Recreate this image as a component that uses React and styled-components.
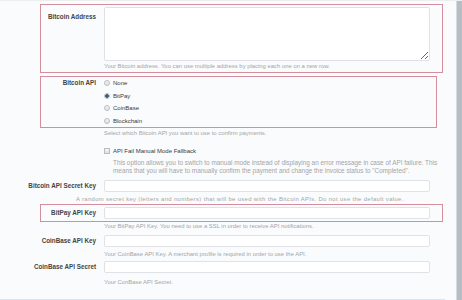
import React from "react";
import styled, { createGlobalStyle } from "styled-components";

const Global = createGlobalStyle`
  html, body { margin: 0; padding: 0; background: #fafbfd; }
  body { font-family: "Liberation Sans", Arial, sans-serif; color: #333; }
  * { box-sizing: border-box; }
`;

const Page = styled.div`
  display: flex;
  width: 462px;
  height: 300px;
  overflow: hidden;
  border-top: 1px solid #eceef0;
`;

const Main = styled.div`
  flex: 1;
  padding-top: 3px;
  display: flex;
  flex-direction: column;
`;

const Scrollbar = styled.div`
  width: 6px;
  background: #b6bdc4;
  border-left: 1px solid #d5dade;
`;

const Frame = styled.div`
  margin-left: 40px;
  margin-top: ${(p) => p.$mt || 0}px;
  width: ${(p) => p.$w || 403}px;
  border: 1px solid ${(p) => (p.$hl ? "#d48e9c" : "transparent")};
  padding: ${(p) => p.$pad || 0}px 0;
`;

const Grid = styled.div`
  display: grid;
  grid-template-columns: 55px 326px;
  column-gap: 8px;
  align-items: ${(p) => p.$align || "center"};
`;

const Label = styled.div`
  display: flex;
  justify-content: flex-end;
  white-space: nowrap;
  font-size: 6.3px;
  font-weight: bold;
  color: #444;
  line-height: 8px;
  padding-top: ${(p) => p.$pt || 0}px;
`;

const TextArea = styled.textarea`
  display: block;
  width: 326px;
  height: 54px;
  margin: 0;
  border: 1px solid #e0e1e4;
  border-radius: 2px;
  background: #fff;
  resize: vertical;
  font: inherit;
  outline: none;
`;

const Input = styled.input`
  display: block;
  width: 326px;
  height: 12px;
  margin: 0;
  padding: 0 3px;
  border: 1px solid #e1e2e5;
  border-radius: 2px;
  background: #fff;
  outline: none;
`;

const Help = styled.div`
  margin-left: ${(p) => p.$left ?? 104}px;
  margin-top: ${(p) => p.$mt || 0}px;
  font-size: 5.9px;
  letter-spacing: ${(p) => p.$track || 0}px;
  line-height: 8px;
  color: #a5a5a5;
  white-space: nowrap;
  grid-column: ${(p) => (p.$inGrid ? "2" : "auto")};
`;

const RadioList = styled.div`
  display: flex;
  flex-direction: column;
`;

const Choice = styled.label`
  display: flex;
  align-items: center;
  gap: 3px;
  height: ${(p) => p.$h || 12.5}px;
  font-size: 6px;
  color: #3a3a3a;
  white-space: nowrap;
`;

const RadioDot = styled.span`
  width: 6px;
  height: 6px;
  border-radius: 50%;
  border: 1px solid #b9bcc0;
  background: ${(p) =>
    p.$on
      ? "radial-gradient(circle, #3d5a86 0 1.6px, #dfe5ee 2px)"
      : "linear-gradient(#f3f3f3, #e2e2e2)"};
  flex: none;
`;

const Box = styled.span`
  width: 6px;
  height: 6px;
  border: 1px solid #b9bcc0;
  background: linear-gradient(#f6f6f6, #e0e0e0);
  flex: none;
`;

const Desc = styled.div`
  margin-left: 113px;
  margin-top: 3px;
  font-size: 6.4px;
  line-height: 8px;
  color: #a5a5a5;
  white-space: nowrap;
`;

const Footer = styled.div`
  margin-top: 13px;
  width: 445px;
  border-top: 1px solid #dbe6ef;
`;

export default function App() {
  return (
    <>
      <Global />
      <Page>
        <Main>
          <Frame $hl $pad={2}>
            <Grid $align="start">
              <Label $pt={6}>Bitcoin Address</Label>
              <TextArea />
              <Help $left={0} $mt={1} $inGrid>
                Your Bitcoin address. You can use multiple address by placing each one on a new row.
              </Help>
            </Grid>
          </Frame>

          <Frame $hl $mt={3} $w={397}>
            <Grid $align="start">
              <Label $pt={2}>Bitcoin API</Label>
              <RadioList>
                <Choice><RadioDot />None</Choice>
                <Choice><RadioDot $on />BitPay</Choice>
                <Choice><RadioDot />CoinBase</Choice>
                <Choice><RadioDot />Blockchain</Choice>
              </RadioList>
            </Grid>
          </Frame>
          <Help $mt={1}>Select which Bitcoin API you want to use to confirm payments.</Help>

          <Frame $mt={9}>
            <Grid>
              <span />
              <Choice $h={8}><Box />API Fail Manual Mode Fallback</Choice>
            </Grid>
          </Frame>
          <Desc>
            This option allows you to switch to manual mode instead of displaying an error message in case of API failure. This
            <br />
            means that you will have to manually confirm the payment and change the invoice status to "Completed".
          </Desc>

          <Frame $mt={4}>
            <Grid>
              <Label>Bitcoin API Secret Key</Label>
              <Input />
            </Grid>
          </Frame>
          <Help $left={76} $mt={2} $track={0.35}>
            A random secret key (letters and numbers) that will be used with the Bitcoin APIs. Do not use the default value.
          </Help>

          <Frame $hl $mt={1} $pad={2}>
            <Grid>
              <Label>BitPay API Key</Label>
              <Input />
            </Grid>
          </Frame>
          <Help>Your BitPay API Key. You need to use a SSL in order to receive API notifications.</Help>

          <Frame $mt={4}>
            <Grid>
              <Label>CoinBase API Key</Label>
              <Input />
            </Grid>
          </Frame>
          <Help $mt={2}>Your CoinBase API Key. A merchant profile is required in order to use the API.</Help>

          <Frame $mt={2}>
            <Grid>
              <Label>CoinBase API Secret</Label>
              <Input />
            </Grid>
          </Frame>
          <Help $mt={4}>Your ConBase API Secret.</Help>

          <Footer />
        </Main>
        <Scrollbar />
      </Page>
    </>
  );
}
